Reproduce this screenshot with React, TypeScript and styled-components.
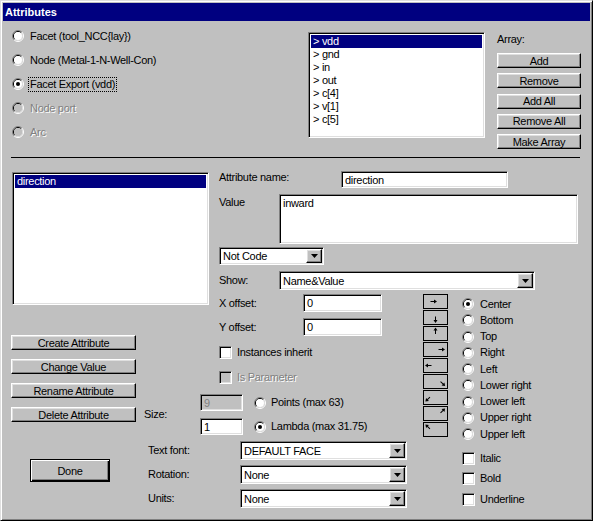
import React from 'react';
import styled, { createGlobalStyle, css } from 'styled-components';

const GlobalStyle = createGlobalStyle`
  html, body {
    margin: 0;
    padding: 0;
    background: #c0c0c0;
  }
  body {
    font-family: "Liberation Sans", Arial, sans-serif;
    font-size: 11px;
  }
`;

const sunken = css`
  box-sizing: border-box;
  border: 1px solid;
  border-color: #808080 #fff #fff #808080;
  box-shadow: inset 1px 1px #000, inset -1px -1px #dfdfdf;
`;

const raised = css`
  box-sizing: border-box;
  border: 1px solid;
  border-color: #fff #000 #000 #fff;
  box-shadow: inset -1px -1px #808080, inset 1px 1px #dfdfdf;
`;

const Window = styled.div`
  box-sizing: border-box;
  width: 593px;
  height: 521px;
  padding: 2px;
  background: #c0c0c0;
  border: 1px solid;
  border-color: #dfdfdf #000 #000 #dfdfdf;
  box-shadow: inset 1px 1px #fff, inset -1px -1px #808080;
  display: flex;
  flex-direction: column;
  font-family: "Liberation Sans", Arial, sans-serif;
  font-size: 11px;
  letter-spacing: -0.3px;
  color: #000;
`;

const TitleBar = styled.div`
  height: 18px;
  line-height: 18px;
  padding-left: 2px;
  background: #000080;
  color: #fff;
  font-weight: bold;
  letter-spacing: 0;
`;

const Body = styled.div`
  flex: 1;
  padding: 3px 9px 0;
  display: flex;
  flex-direction: column;
`;

// ---- top half: what the attributes belong to

const TopSection = styled.div`
  display: flex;
  height: 130px;
`;

const SourceColumn = styled.div`
  width: 296px;
  display: flex;
  flex-direction: column;
`;

const RadioRow = styled.div<{ $h?: number }>`
  height: ${p => p.$h || 24}px;
  flex-shrink: 0;
  display: flex;
  align-items: center;
  gap: 6px;
`;

const Caption = styled.span<{ $disabled?: boolean }>`
  white-space: nowrap;
  line-height: 13px;
  ${p =>
    p.$disabled &&
    css`
      color: #808080;
      text-shadow: 1px 1px 0 #fff;
    `}
`;

const FocusCaption = styled(Caption)`
  border: 1px dotted #000;
  padding: 0 1px;
  margin-left: -2px;
`;

const ListBox = styled.div<{ $w: number; $h: number; $top?: number }>`
  ${sunken};
  width: ${p => p.$w}px;
  height: ${p => p.$h}px;
  margin-top: ${p => p.$top || 0}px;
  padding: 2px;
  background: #fff;
  overflow: hidden;
  flex-shrink: 0;
`;

const ListItem = styled.div<{ $selected?: boolean }>`
  height: 13px;
  line-height: 13px;
  padding-left: 2px;
  white-space: nowrap;
  background: ${p => (p.$selected ? '#000080' : 'transparent')};
  color: ${p => (p.$selected ? '#fff' : '#000')};
`;

const ArrayColumn = styled.div`
  width: 84px;
  margin: 9px 0 0 12px;
  display: flex;
  flex-direction: column;
`;

const ArrayLabel = styled.div`
  line-height: 13px;
  margin-bottom: 7px;
`;

const ButtonStack = styled.div<{ $gap: number }>`
  display: flex;
  flex-direction: column;
  gap: ${p => p.$gap}px;
`;

const PushButton = styled.button<{ $w?: number }>`
  ${raised};
  width: ${p => (p.$w ? `${p.$w}px` : '100%')};
  height: 15px;
  flex-shrink: 0;
  padding: 0;
  background: #c0c0c0;
  font: inherit;
  letter-spacing: inherit;
  line-height: 12px;
  color: #000;
  text-align: center;
`;

const Separator = styled.div`
  height: 1px;
  margin: 3px 1px 0 -1px;
  background: #000;
`;

// ---- bottom half: the attribute editor

const EditorGrid = styled.div`
  margin-top: 12px;
  display: grid;
  grid-template-columns: 123px 84px 204px 39px 1fr;
  grid-template-rows: 122px 42px 56px 48px 72px;
`;

const AttrList = styled(ListBox)`
  grid-column: 1 / 3;
  grid-row: 1 / 3;
  margin-top: 2px;
`;

const Fields = styled.div`
  grid-column: 3 / 6;
  grid-row: 1;
  padding-top: 1px;
  display: flex;
  flex-direction: column;
`;

const FieldRow = styled.div<{ $top?: number; $align?: string }>`
  display: flex;
  align-items: ${p => p.$align || 'center'};
  margin-top: ${p => p.$top || 0}px;
  flex-shrink: 0;
`;

const FieldLabel = styled.div<{ $w: number; $pad?: number }>`
  width: ${p => p.$w}px;
  flex-shrink: 0;
  line-height: 13px;
  padding-top: ${p => p.$pad || 0}px;
  white-space: nowrap;
`;

const TextField = styled.div<{ $w: number; $h: number; $disabled?: boolean }>`
  ${sunken};
  width: ${p => p.$w}px;
  height: ${p => p.$h}px;
  padding: 2px 3px 0;
  line-height: 12px;
  background: ${p => (p.$disabled ? '#c0c0c0' : '#fff')};
  color: ${p => (p.$disabled ? '#808080' : '#000')};
  white-space: nowrap;
  overflow: hidden;
  flex-shrink: 0;
`;

const Combo = styled.div<{ $w: number; $h: number }>`
  ${sunken};
  width: ${p => p.$w}px;
  height: ${p => p.$h}px;
  padding: 1px;
  background: #fff;
  display: flex;
  flex-shrink: 0;
`;

const ComboText = styled.div`
  flex: 1;
  padding-left: 2px;
  display: flex;
  align-items: center;
  white-space: nowrap;
`;

const DropButton = styled.div`
  ${raised};
  width: 16px;
  background: #c0c0c0;
  display: flex;
  align-items: center;
  justify-content: center;
`;

const Offsets = styled.div`
  grid-column: 3;
  grid-row: 2;
  padding-top: 2px;
  display: flex;
  flex-direction: column;
  gap: 6px;
`;

const AttrButtons = styled(ButtonStack)`
  grid-column: 1;
  grid-row: 3 / 5;
  padding-top: 1px;
  margin-left: -1px;
`;

const Options = styled.div`
  grid-column: 3;
  grid-row: 3;
  padding-top: 12px;
  display: flex;
  flex-direction: column;
  gap: 12px;
`;

const CheckRow = styled.div<{ $h?: number }>`
  height: ${p => p.$h || 13}px;
  flex-shrink: 0;
  display: flex;
  align-items: center;
  gap: 5px;
`;

const CheckBox = styled.div<{ $disabled?: boolean }>`
  ${sunken};
  width: 13px;
  height: 13px;
  flex-shrink: 0;
  background: ${p => (p.$disabled ? '#c0c0c0' : '#fff')};
`;

const SizeBlock = styled.div`
  grid-column: 2 / 4;
  grid-row: 4;
  padding: 4px 0 0 9px;
  display: flex;
  align-items: center;
  align-self: start;
`;

const SizeRows = styled.div`
  display: flex;
  flex-direction: column;
  gap: 7px;
`;

const SizeRow = styled.div`
  display: flex;
  align-items: center;
`;

const SizeChoice = styled.div`
  margin-left: 11px;
  display: flex;
  align-items: center;
  gap: 5px;
`;

const FontBlock = styled.div`
  grid-column: 2 / 4;
  grid-row: 5;
  padding: 3px 0 0 13px;
  display: flex;
  flex-direction: column;
  gap: 5px;
`;

const DoneButton = styled.button`
  grid-column: 1;
  grid-row: 5;
  align-self: start;
  margin: 21px 0 0 18px;
  width: 80px;
  height: 23px;
  padding: 0;
  box-sizing: border-box;
  border: 1px solid #000;
  box-shadow: inset 1px 1px #fff, inset -1px -1px #000, inset -2px -2px #808080;
  background: #c0c0c0;
  font: inherit;
  letter-spacing: inherit;
  color: #000;
`;

const AnchorButtons = styled.div`
  grid-column: 4;
  grid-row: 2 / 5;
  padding-top: 2px;
  display: flex;
  flex-direction: column;
  gap: 1px;
`;

const AnchorButton = styled.div`
  box-sizing: border-box;
  width: 25px;
  height: 15px;
  flex-shrink: 0;
  border: 1px solid #000;
  background: #c0c0c0;
  display: flex;
`;

const AnchorChoices = styled.div`
  grid-column: 5;
  grid-row: 2 / 5;
  padding-top: 4px;
  display: flex;
  flex-direction: column;
`;

const StyleChecks = styled.div`
  grid-column: 5;
  grid-row: 5;
  padding-top: 10px;
  display: flex;
  flex-direction: column;
`;

const RadioSvg = styled.svg`
  flex-shrink: 0;
  display: block;
`;

const Radio = ({ checked, disabled }: { checked?: boolean; disabled?: boolean }) => (
  <RadioSvg width="12" height="12" viewBox="0 0 12 12">
    <path d="M2.1 9.9 A5.5 5.5 0 0 1 9.9 2.1" fill="none" stroke="#808080" />
    <path d="M9.9 2.1 A5.5 5.5 0 0 1 2.1 9.9" fill="none" stroke="#fff" />
    <path d="M2.8 9.2 A4.5 4.5 0 0 1 9.2 2.8" fill="none" stroke="#000" />
    <path d="M9.2 2.8 A4.5 4.5 0 0 1 2.8 9.2" fill="none" stroke="#dfdfdf" />
    <circle cx="6" cy="6" r="4" fill={disabled ? '#c0c0c0' : '#fff'} />
    {checked && <circle cx="6" cy="6" r="2" fill="#000" />}
  </RadioSvg>
);

const DropArrow = () => (
  <svg width="7" height="4" viewBox="0 0 7 4">
    <path d="M0 0 H7 L3.5 4 Z" fill="#000" />
  </svg>
);

const ComboBox = ({ w, h, value }: { w: number; h: number; value: string }) => (
  <Combo $w={w} $h={h}>
    <ComboText>{value}</ComboText>
    <DropButton>
      <DropArrow />
    </DropButton>
  </Combo>
);

const AnchorArrow = ({ x, y, angle }: { x: number; y: number; angle: number }) => (
  <svg width="23" height="13" viewBox="0 0 23 13">
    <g transform={`translate(${x} ${y}) rotate(${angle})`}>
      <line x1="-3.5" y1="0" x2="1" y2="0" stroke="#000" />
      <path d="M0 -2 L3 0 L0 2 Z" fill="#000" />
    </g>
  </svg>
);

const exports = ['vdd', 'gnd', 'in', 'out', 'c[4]', 'v[1]', 'c[5]'];

const anchors = [
  { name: 'Center', x: 10, y: 6.5, angle: 0 },
  { name: 'Bottom', x: 11.5, y: 9, angle: 90 },
  { name: 'Top', x: 11.5, y: 3.5, angle: -90 },
  { name: 'Right', x: 18, y: 6.5, angle: 0 },
  { name: 'Left', x: 4, y: 6.5, angle: 180 },
  { name: 'Lower right', x: 19, y: 9, angle: 45 },
  { name: 'Lower left', x: 3.5, y: 8.5, angle: 135 },
  { name: 'Upper right', x: 19, y: 3.5, angle: -45 },
  { name: 'Upper left', x: 3.5, y: 3.5, angle: -135 },
];

export default function App() {
  return (
    <>
      <GlobalStyle />
      <Window>
        <TitleBar>Attributes</TitleBar>
        <Body>
          <TopSection>
            <SourceColumn>
              <RadioRow>
                <Radio />
                <Caption>Facet (tool_NCC{'{'}lay{'}'})</Caption>
              </RadioRow>
              <RadioRow>
                <Radio />
                <Caption>Node (Metal-1-N-Well-Con)</Caption>
              </RadioRow>
              <RadioRow>
                <Radio checked />
                <FocusCaption>Facet Export (vdd)</FocusCaption>
              </RadioRow>
              <RadioRow>
                <Radio disabled />
                <Caption $disabled>Node port</Caption>
              </RadioRow>
              <RadioRow>
                <Radio disabled />
                <Caption $disabled>Arc</Caption>
              </RadioRow>
            </SourceColumn>
            <ListBox $w={177} $h={106} $top={8}>
              {exports.map((e, i) => (
                <ListItem key={e} $selected={i === 0}>
                  &gt; {e}
                </ListItem>
              ))}
            </ListBox>
            <ArrayColumn>
              <ArrayLabel>Array:</ArrayLabel>
              <ButtonStack $gap={5.25}>
                <PushButton>Add</PushButton>
                <PushButton>Remove</PushButton>
                <PushButton>Add All</PushButton>
                <PushButton>Remove All</PushButton>
                <PushButton>Make Array</PushButton>
              </ButtonStack>
            </ArrayColumn>
          </TopSection>

          <Separator />

          <EditorGrid>
            <AttrList $w={197} $h={133}>
              <ListItem $selected>direction</ListItem>
            </AttrList>

            <Fields>
              <FieldRow $align="flex-start">
                <FieldLabel $w={122}>Attribute name:</FieldLabel>
                <TextField $w={167} $h={17}>direction</TextField>
              </FieldRow>
              <FieldRow $top={6} $align="flex-start">
                <FieldLabel $w={60} $pad={2}>Value</FieldLabel>
                <TextField $w={299} $h={50}>inward</TextField>
              </FieldRow>
              <FieldRow $top={3}>
                <ComboBox w={105} h={18} value="Not Code" />
              </FieldRow>
              <FieldRow $top={6}>
                <FieldLabel $w={60}>Show:</FieldLabel>
                <ComboBox w={256} h={19} value="Name&Value" />
              </FieldRow>
            </Fields>

            <Offsets>
              <FieldRow>
                <FieldLabel $w={84}>X offset:</FieldLabel>
                <TextField $w={79} $h={18}>0</TextField>
              </FieldRow>
              <FieldRow>
                <FieldLabel $w={84}>Y offset:</FieldLabel>
                <TextField $w={79} $h={18}>0</TextField>
              </FieldRow>
            </Offsets>

            <AttrButtons $gap={9}>
              <PushButton $w={125}>Create Attribute</PushButton>
              <PushButton $w={125}>Change Value</PushButton>
              <PushButton $w={125}>Rename Attribute</PushButton>
              <PushButton $w={125}>Delete Attribute</PushButton>
            </AttrButtons>

            <Options>
              <CheckRow>
                <CheckBox />
                <Caption>Instances inherit</Caption>
              </CheckRow>
              <CheckRow>
                <CheckBox $disabled />
                <Caption $disabled>Is Parameter</Caption>
              </CheckRow>
            </Options>

            <SizeBlock>
              <FieldLabel $w={56}>Size:</FieldLabel>
              <SizeRows>
                <SizeRow>
                  <TextField $w={43} $h={17} $disabled>
                    9
                  </TextField>
                  <SizeChoice>
                    <Radio />
                    <Caption>Points (max 63)</Caption>
                  </SizeChoice>
                </SizeRow>
                <SizeRow>
                  <TextField $w={43} $h={17}>1</TextField>
                  <SizeChoice>
                    <Radio checked />
                    <Caption>Lambda (max 31.75)</Caption>
                  </SizeChoice>
                </SizeRow>
              </SizeRows>
            </SizeBlock>

            <FontBlock>
              <FieldRow>
                <FieldLabel $w={92}>Text font:</FieldLabel>
                <ComboBox w={167} h={19} value="DEFAULT FACE" />
              </FieldRow>
              <FieldRow>
                <FieldLabel $w={92}>Rotation:</FieldLabel>
                <ComboBox w={167} h={19} value="None" />
              </FieldRow>
              <FieldRow>
                <FieldLabel $w={92}>Units:</FieldLabel>
                <ComboBox w={167} h={19} value="None" />
              </FieldRow>
            </FontBlock>

            <DoneButton>Done</DoneButton>

            <AnchorButtons>
              {anchors.map(a => (
                <AnchorButton key={a.name}>
                  <AnchorArrow x={a.x} y={a.y} angle={a.angle} />
                </AnchorButton>
              ))}
            </AnchorButtons>

            <AnchorChoices>
              {anchors.map((a, i) => (
                <RadioRow key={a.name} $h={16.25}>
                  <Radio checked={i === 0} />
                  <Caption>{a.name}</Caption>
                </RadioRow>
              ))}
            </AnchorChoices>

            <StyleChecks>
              {['Italic', 'Bold', 'Underline'].map(s => (
                <CheckRow key={s} $h={20.5}>
                  <CheckBox />
                  <Caption>{s}</Caption>
                </CheckRow>
              ))}
            </StyleChecks>
          </EditorGrid>
        </Body>
      </Window>
    </>
  );
}
